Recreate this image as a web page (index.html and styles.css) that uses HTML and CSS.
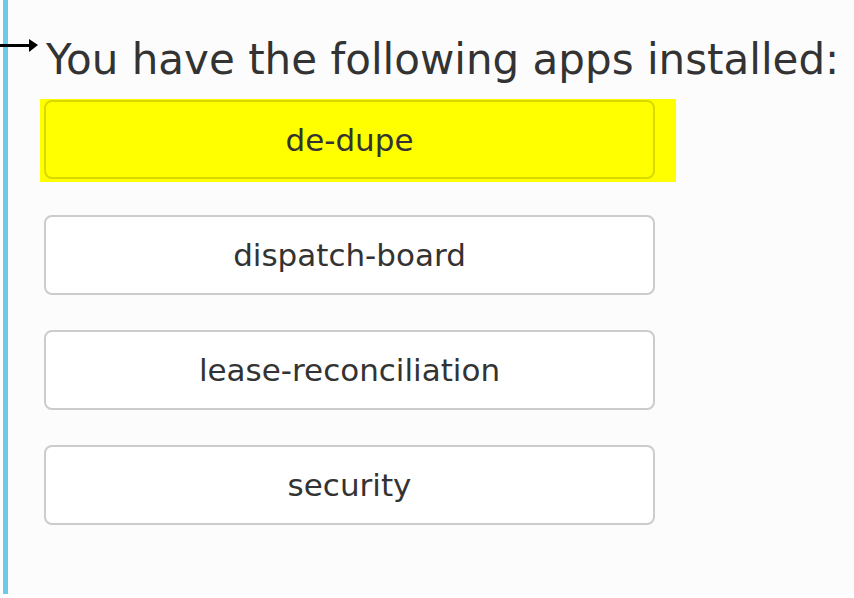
FILE: index.html
```html
<!DOCTYPE html>
<html lang="en">
<head>
  <meta charset="UTF-8">
  <title>Installed apps</title>
  <link rel="stylesheet" href="styles.css">
</head>
<body>
  <div class="frame">
    <span class="pointer"></span>
    <h1>You have the following apps installed:</h1>

    <div class="apps">
      <div class="highlight">
        <button class="app app-active">de-dupe</button>
      </div>
      <button class="app">dispatch-board</button>
      <button class="app">lease-reconciliation</button>
      <button class="app">security</button>
    </div>
  </div>
</body>
</html>
```

FILE: styles.css
```css
body {
  margin: 0;
  background: #ffffff;
  font-family: "DejaVu Sans", Verdana, sans-serif;
  color: #333333;
}

.frame {
  position: relative;
  margin-left: 3px;
  height: 594px;
  border-left: 5px solid #6ccbe8;
  background: #fcfcfc;
  box-sizing: border-box;
}

.pointer {
  position: absolute;
  left: -8px;
  top: 44px;
  width: 32px;
  height: 3px;
  background: #000;
}

.pointer::after {
  content: "";
  position: absolute;
  right: -6px;
  top: -5px;
  border-left: 9px solid #000;
  border-top: 6px solid transparent;
  border-bottom: 7px solid transparent;
}

h1 {
  margin: 0;
  padding: 33px 0 0 38px;
  font-size: 42px;
  font-weight: normal;
  line-height: 54px;
  color: #333333;
}

.apps {
  display: flex;
  flex-direction: column;
  align-items: flex-start;
  padding-left: 32px;
  margin-top: 12px;
}

.highlight {
  background: #ffff00;
  padding: 1px 21px 3px 4px;
  margin-bottom: 33px;
}

.app {
  display: block;
  width: 611px;
  height: 80px;
  margin-left: 4px;
  margin-bottom: 35px;
  border: 2px solid #cccccc;
  border-radius: 8px;
  background: #ffffff;
  font-family: "DejaVu Sans", Verdana, sans-serif;
  font-size: 31px;
  color: #333333;
  text-align: center;
}

.highlight .app {
  height: 79px;
  margin: 0;
}

.app-active {
  background: #ffff00;
  border-color: #d9d900;
}
```
